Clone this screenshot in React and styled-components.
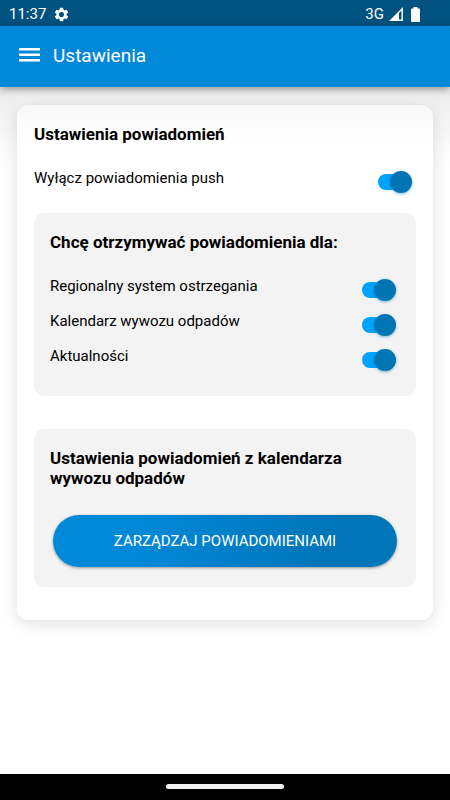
import React, { useState } from 'react';
import styled, { createGlobalStyle } from 'styled-components';

const GlobalStyle = createGlobalStyle`
	* {
		box-sizing: border-box;
	}

	body {
		margin: 0;
		background: #fff;
		color: #000;
		font-family: Roboto, 'Noto Sans', sans-serif;
	}
`;

const Screen = styled.div`
	min-height: 100vh;
	display: flex;
	flex-direction: column;
`;

const StatusBar = styled.div`
	height: 26px;
	padding: 2px 30px 0 9px;
	display: flex;
	align-items: center;
	justify-content: space-between;
	background: #005280;
	color: #fff;
	font-size: 15px;
	line-height: 24px;
`;

const StatusGroup = styled.div`
	display: flex;
	align-items: center;
	gap: ${({ $gap }) => $gap}px;
`;

const Header = styled.header`
	position: relative;
	height: 61px;
	padding: 0 16px 2px;
	display: flex;
	align-items: center;
	gap: 10px;
	background: #0288d8;
	color: #fff;
	box-shadow: 0 2px 8px rgba(0, 0, 0, 0.4);
`;

const MenuButton = styled.button`
	display: flex;
	padding: 0;
	border: none;
	background: none;
	color: inherit;
	cursor: pointer;
`;

const PageTitle = styled.h1`
	margin: 0;
	font-size: 19px;
	font-weight: 400;
	line-height: 24px;
`;

const Content = styled.main`
	flex: 1;
	padding: 18px 17px;
	background: linear-gradient(#ececec, #fff 80px);
`;

const Card = styled.section`
	padding: 19px 17px 33px;
	border-radius: 12px;
	background: linear-gradient(#f8f8f8, #fff 36px);
	box-shadow: 0 4px 16px rgba(0, 0, 0, 0.12);
`;

const Panel = styled.section`
	margin-top: ${({ $top }) => $top}px;
	padding: 19px 16px ${({ $bottom }) => $bottom}px;
	border-radius: 10px;
	background: #f3f3f3;
`;

const Heading = styled.h2`
	margin: 0 0 17px;
	font-size: 17px;
	font-weight: 700;
	line-height: 20px;
`;

const SettingRow = styled.div`
	height: 35px;
	padding-right: 4px;
	display: flex;
	align-items: flex-start;
	justify-content: space-between;
`;

const SettingLabel = styled.label`
	padding-top: 8px;
	font-size: 15px;
	line-height: 18px;
`;

const Switch = styled.input`
	appearance: none;
	position: relative;
	width: 34px;
	height: 22px;
	margin: 10px 0 0;
	cursor: pointer;

	&::before {
		content: '';
		position: absolute;
		top: 3px;
		left: 0;
		width: 32px;
		height: 16px;
		border-radius: 8px;
		background: #b5b5b5;
	}

	&::after {
		content: '';
		position: absolute;
		top: 0;
		left: 0;
		width: 22px;
		height: 22px;
		border-radius: 50%;
		background: #fff;
		box-shadow: 0 1px 3px rgba(0, 117, 180, 0.5);
	}

	&:checked::before {
		background: #00a2ff;
	}

	&:checked::after {
		left: 12px;
		background: #0075b4;
	}
`;

const ManageButton = styled.button`
	display: block;
	width: calc(100% - 6px);
	height: 52px;
	margin: 27px 3px 0;
	border: none;
	border-radius: 26px;
	background: linear-gradient(100deg, #0288d8 25%, #0075b8 80%);
	box-shadow: 0 1px 3px rgba(0, 0, 0, 0.4);
	color: #fff;
	font-family: inherit;
	font-size: 15px;
	text-transform: uppercase;
	cursor: pointer;
`;

const NavigationBar = styled.div`
	height: 26px;
	padding-top: 10px;
	background: #000;
`;

const HomeHandle = styled.div`
	width: 118px;
	height: 5px;
	margin: 0 auto;
	border-radius: 3px;
	background: #f1f1f1;
`;

const GearIcon = () => (
	<svg width="17" height="17" viewBox="0 0 24 24" fill="currentColor" aria-hidden="true">
		<path d="M19.14 12.94c.04-.3.06-.61.06-.94s-.02-.64-.07-.94l2.03-1.58a.49.49 0 0 0 .12-.61l-1.92-3.32a.49.49 0 0 0-.59-.22l-2.39.96a7 7 0 0 0-1.62-.94l-.36-2.54a.48.48 0 0 0-.48-.41h-3.84a.48.48 0 0 0-.47.41l-.36 2.54a7.3 7.3 0 0 0-1.62.94l-2.39-.96a.48.48 0 0 0-.59.22L2.74 8.87a.48.48 0 0 0 .12.61l2.03 1.58a6 6 0 0 0 0 1.88l-2.03 1.58a.49.49 0 0 0-.12.61l1.92 3.32c.12.22.37.29.59.22l2.39-.96c.5.38 1.03.7 1.62.94l.36 2.54c.05.24.24.41.48.41h3.84c.24 0 .44-.17.47-.41l.36-2.54a7.3 7.3 0 0 0 1.62-.94l2.39.96c.22.08.47 0 .59-.22l1.92-3.32a.48.48 0 0 0-.12-.61zM12 15.6a3.6 3.6 0 1 1 0-7.2 3.6 3.6 0 0 1 0 7.2z" />
	</svg>
);

const SignalIcon = () => (
	<svg width="14" height="14" viewBox="0 0 14 14" fill="currentColor" aria-hidden="true">
		<path fillRule="evenodd" d="M14 0v14H0zM12.5 3.5L10 6v6.5h2.500z" />
	</svg>
);

const BatteryIcon = () => (
	<svg width="9" height="15" viewBox="0 0 9 15" fill="currentColor" aria-hidden="true">
		<path d="M2.5 0h4v1.5H8a1 1 0 0 1 1 1V14a1 1 0 0 1-1 1H1a1 1 0 0 1-1-1V2.500a1 1 0 0 1 1-1h1.500z" />
	</svg>
);

const MenuIcon = () => (
	<svg width="27" height="27" viewBox="0 0 27 27" fill="currentColor" aria-hidden="true">
		<path d="M3 6h21v2.500H3zM3 11.500h21V14H3zM3 17h21v2.500H3z" />
	</svg>
);

const topics = [
	{ id: 'warnings', label: 'Regionalny system ostrzegania' },
	{ id: 'waste', label: 'Kalendarz wywozu odpadów' },
	{ id: 'news', label: 'Aktualności' },
];

const Setting = ({ id, label, checked, onToggle }) => (
	<SettingRow>
		<SettingLabel htmlFor={id}>{label}</SettingLabel>
		<Switch id={id} type="checkbox" checked={checked} onChange={() => onToggle(id)} />
	</SettingRow>
);

const App = () => {
	const [settings, setSettings] = useState({ push: true, warnings: true, waste: true, news: true });

	const handleToggle = (id) => {
		setSettings({ ...settings, [id]: !settings[id] });
	};

	return (
		<Screen>
			<GlobalStyle />
			<StatusBar>
				<StatusGroup $gap={7}>
					<span>11:37</span>
					<GearIcon />
				</StatusGroup>
				<StatusGroup $gap={8}>
					<StatusGroup $gap={5}>
						<span>3G</span>
						<SignalIcon />
					</StatusGroup>
					<BatteryIcon />
				</StatusGroup>
			</StatusBar>
			<Header>
				<MenuButton type="button" aria-label="Menu">
					<MenuIcon />
				</MenuButton>
				<PageTitle>Ustawienia</PageTitle>
			</Header>
			<Content>
				<Card>
					<Heading>Ustawienia powiadomień</Heading>
					<Setting id="push" label="Wyłącz powiadomienia push" checked={settings.push} onToggle={handleToggle} />
					<Panel $top={17} $bottom={22}>
						<Heading>Chcę otrzymywać powiadomienia dla:</Heading>
						{topics.map(({ id, label }) => (
							<Setting key={id} id={id} label={label} checked={settings[id]} onToggle={handleToggle} />
						))}
					</Panel>
					<Panel $top={33} $bottom={20}>
						<Heading>Ustawienia powiadomień z kalendarza wywozu odpadów</Heading>
						<ManageButton type="button">Zarządzaj powiadomieniami</ManageButton>
					</Panel>
				</Card>
			</Content>
			<NavigationBar>
				<HomeHandle />
			</NavigationBar>
		</Screen>
	);
};

export default App;
